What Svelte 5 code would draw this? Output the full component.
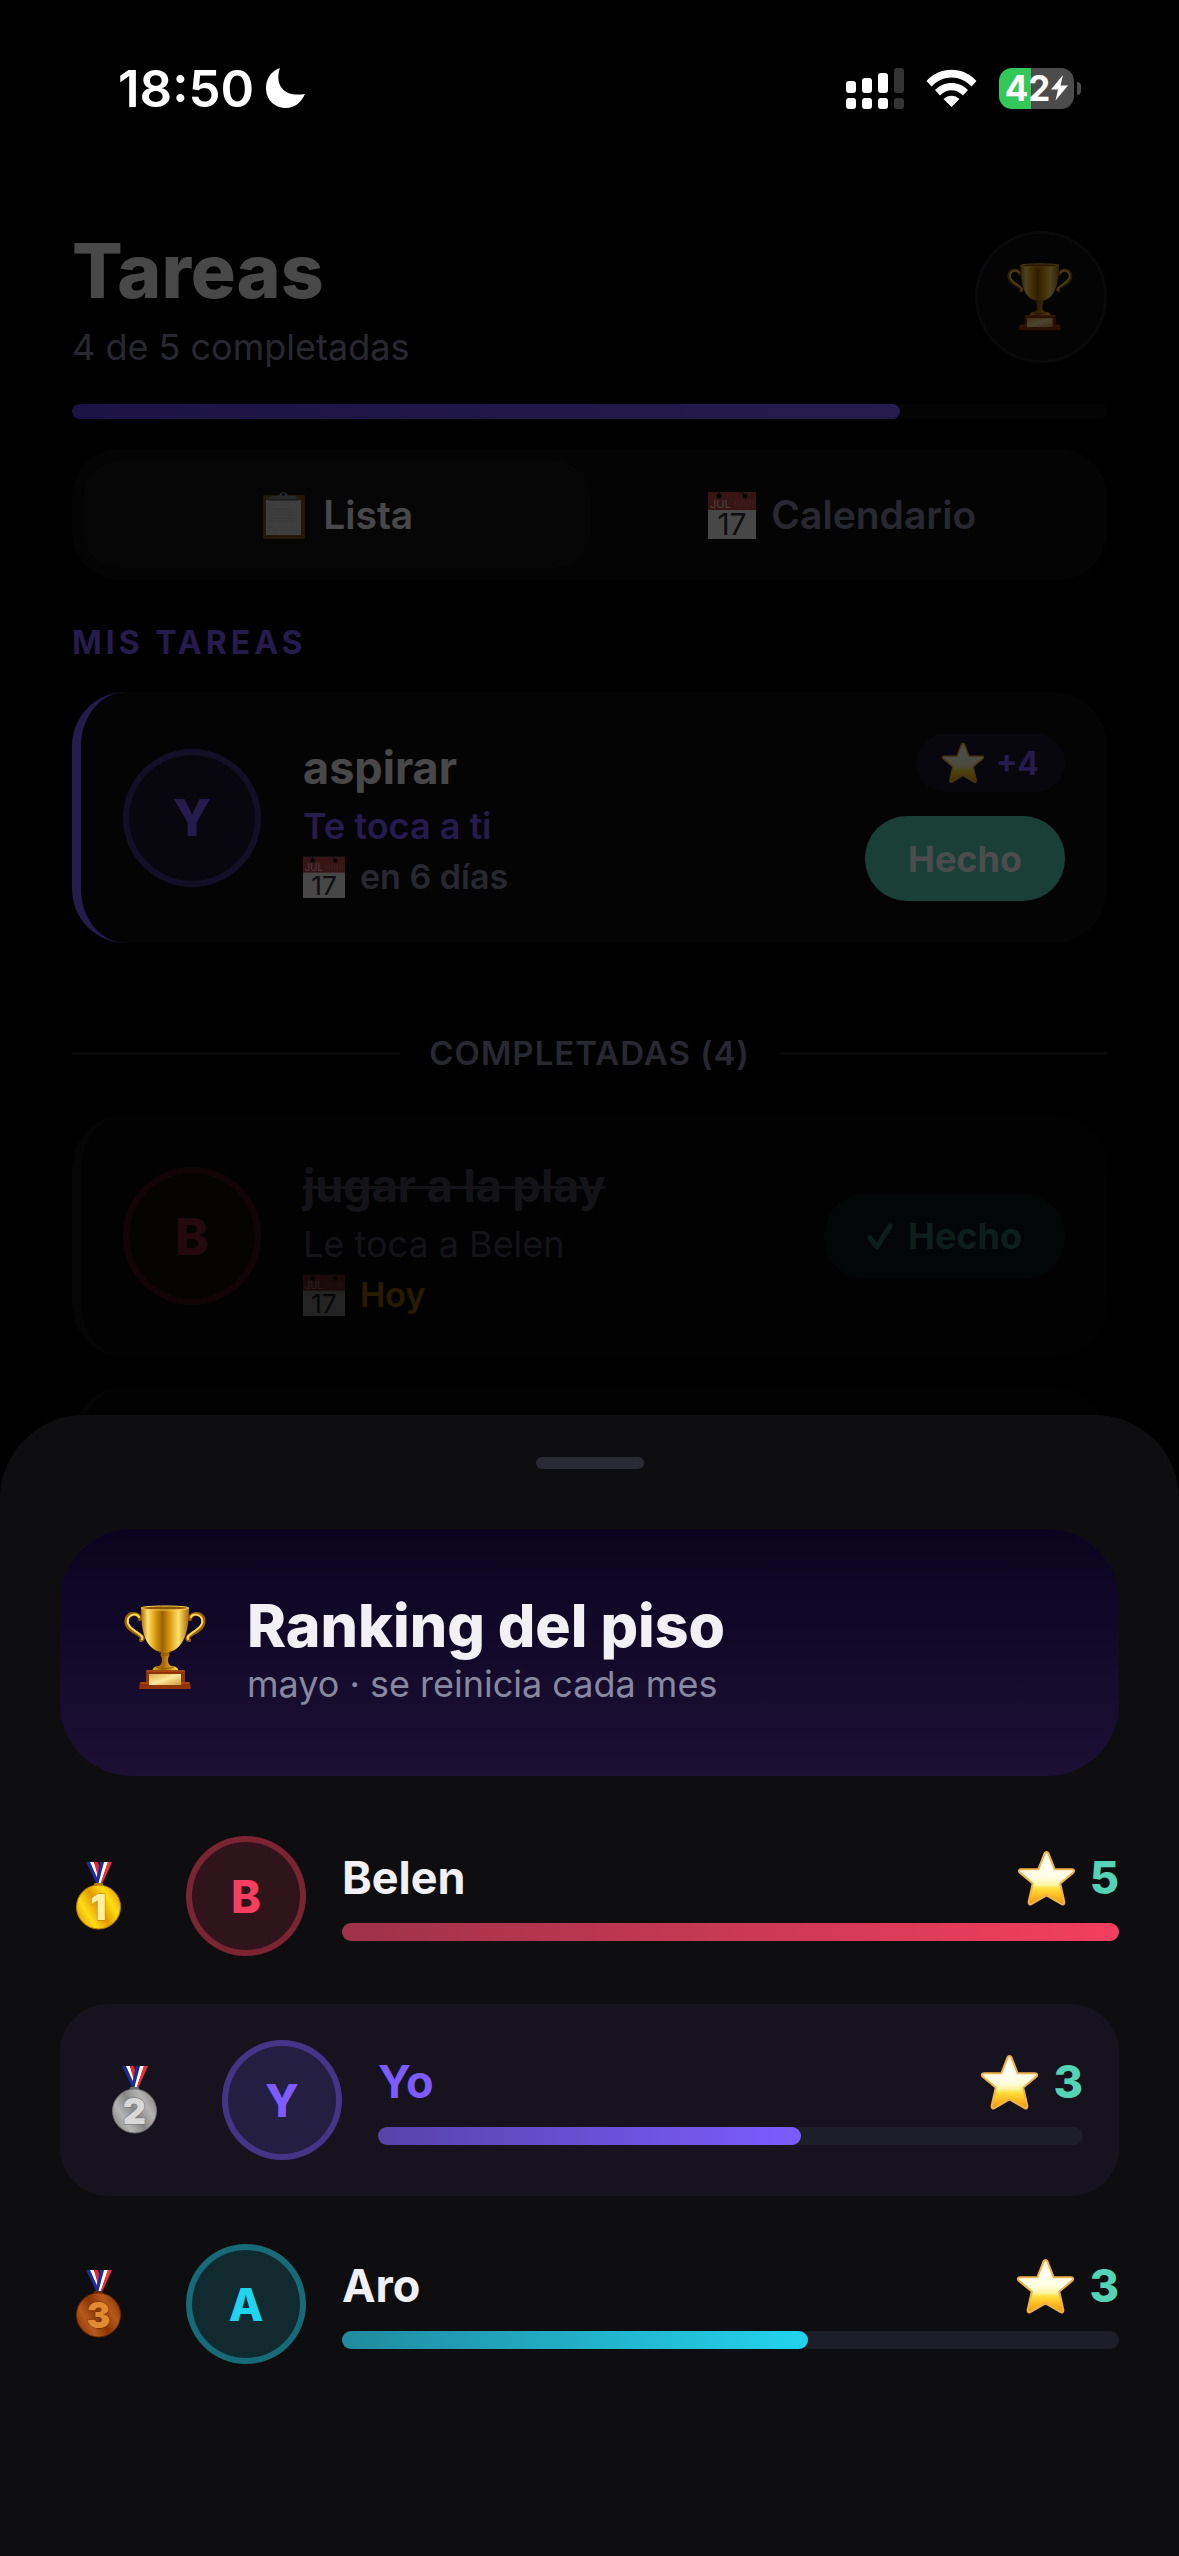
<script lang="ts">
	type Task = {
		initial: string;
		tone: string;
		title: string;
		who: string;
		mine: boolean;
		due: string;
		today: boolean;
		points?: number;
	};

	const tasks: Task[] = [
		{ initial: 'Y', tone: '#7c5cff', title: 'aspirar', who: 'Te toca a ti', mine: true, due: 'en 6 días', today: false, points: 4 }
	];

	const doneTasks: Task[] = [
		{ initial: 'B', tone: '#f43f5e', title: 'jugar a la play', who: 'Le toca a Belen', mine: false, due: 'Hoy', today: true }
	];

	const ranking = [
		{ place: 1, initial: 'B', name: 'Belen', tone: '#f43f5e', points: 5, me: false },
		{ place: 2, initial: 'Y', name: 'Yo', tone: '#7c5cff', points: 3, me: true },
		{ place: 3, initial: 'A', name: 'Aro', tone: '#22d3ee', points: 3, me: false }
	];

	const medals = [
		{ light: '#ffdc14', dark: '#e09c00', edge: '#b87a00', ink: '#fff0a0' },
		{ light: '#b4b4b4', dark: '#868686', edge: '#6e6e6e', ink: '#d8d8d8' },
		{ light: '#b45a1e', dark: '#8a3400', edge: '#6e2800', ink: '#e08a32' }
	];

	const best = Math.max(...ranking.map((r) => r.points));

	let tab = $state('lista');
</script>

{#snippet trophy(size: number, id: string, top: number)}
	<svg viewBox="0 {top} 105 105" width={size} height={size} aria-hidden="true">
		<defs>
			<linearGradient id="{id}-cup" x1="0" x2="1">
				<stop offset="0" stop-color="#a86a00" />
				<stop offset="0.14" stop-color="#ffe277" />
				<stop offset="0.28" stop-color="#e0a313" />
				<stop offset="0.45" stop-color="#9c6200" />
				<stop offset="0.6" stop-color="#d99a10" />
				<stop offset="0.78" stop-color="#ffe06a" />
				<stop offset="1" stop-color="#a46a00" />
			</linearGradient>
			<linearGradient id="{id}-plate" x1="0" y1="0" x2="1" y2="1">
				<stop offset="0" stop-color="#d9ac48" />
				<stop offset="0.5" stop-color="#ffe79a" />
				<stop offset="1" stop-color="#cd9a3a" />
			</linearGradient>
		</defs>
		<g fill="none" stroke-linecap="round">
			<path d="M26 24C25 18 16 17 13 23C10 32 19 36 24 39C29 42 30 44 27 45" stroke="#9a6306" stroke-width="4" />
			<path d="M25 22C23 18 16 19 14 24C12 31 20 35 24 38C28 41 29 42 28 44" stroke="#ffd65a" stroke-width="2" />
			<path d="M76 24C77 18 86 17 89 23C92 32 83 36 78 39C73 42 72 44 75 45" stroke="#9a6306" stroke-width="4" />
			<path d="M77 22C79 18 86 19 88 24C90 31 82 35 78 38C74 41 73 42 74 44" stroke="#ffd65a" stroke-width="2" />
		</g>
		<path d="M27 13C27 36 31 54 47 57V61C49 65 48 69 45 71C40 71 38 74 39 76H64C65 73 61 71 57 71C54 69 53 65 55 61V57C70 54 75 36 75 13Z" fill="url(#{id}-cup)" />
		<ellipse cx="51" cy="13" rx="24" ry="2" fill="#8a5600" stroke="#ffd24e" stroke-width="1" />
		<path d="M45 57C49 59 53 59 57 57M46 60H56M42 72C48 74 54 74 60 72" fill="none" stroke="#8a5600" stroke-width="1" />
		<path d="M32 75H71V87H76L77 94H25L26 87H32Z" fill="#8e3408" />
		<path d="M33 76H70M27 88H75" stroke="#bb571c" stroke-width="1" />
		<rect x="35" y="79" width="32" height="11" fill="url(#{id}-plate)" />
	</svg>
{/snippet}

{#snippet star(size: number, id: string)}
	<svg viewBox="0 0 56 54" width={size} height={size} aria-hidden="true">
		<defs>
			<linearGradient id={id} x1="0" y1="0" x2="0" y2="1">
				<stop offset="0" stop-color="#fff2c8" />
				<stop offset="0.25" stop-color="#fffff4" />
				<stop offset="0.5" stop-color="#fffde0" />
				<stop offset="0.62" stop-color="#fff6a8" />
				<stop offset="0.7" stop-color="#ffdf3c" />
				<stop offset="0.85" stop-color="#fcb81c" />
				<stop offset="1" stop-color="#e8960f" />
			</linearGradient>
		</defs>
		<path
			d="M26 2.500C27 .6 29 .6 30 2.500L36 18H53C55.500 18 55.800 20 54 21.500L41.500 32L45.500 50C45.800 52.500 44 53 42.500 52L28 43.500L13.500 52C12 53 10.200 52.500 10.500 50L14.500 32L2 21.500C.2 20 .5 18 3 18H20Z"
			fill="url(#{id})"
			stroke="#f0b24a"
			stroke-width="2"
		/>
	</svg>
{/snippet}

{#snippet calendar(size: number)}
	<svg viewBox="0 0 48 48" width={size} height={size} aria-hidden="true">
		<rect x="0" y="1" width="48" height="47" fill="#eeeeee" />
		<rect x="0" y="1" width="48" height="18" fill="#b84848" />
		<path d="M27 10V16M30 10V16M33 10V16M36 9V16M39 9V16M42 9V16M45 9V16" stroke="#d06c6c" stroke-width="1" />
		<circle cx="11" cy="5" r="2.500" fill="#1c1010" />
		<circle cx="37" cy="5" r="2.500" fill="#1c1010" />
		<path d="M11 1V5M34 1L37 5" stroke="#1c1010" stroke-width="1" />
		<text x="2" y="17" font-size="11" font-weight="400" fill="#f4d4d4">JUL</text>
		<text x="24" y="44" font-size="30" font-weight="400" text-anchor="middle" fill="#333333">17</text>
	</svg>
{/snippet}

{#snippet clipboard()}
	<svg viewBox="0 0 48 48" width="48" height="48" aria-hidden="true">
		<rect x="3" y="4" width="42" height="44" rx="2" fill="#74502a" />
		<rect x="6" y="9" width="35" height="35" fill="#cfcfcf" />
		<path d="M9 13H14M9 18H34M9 21H36M9 24H35M9 27H36M9 30H34M9 36H14M9 39H17" stroke="#bcbcbc" stroke-width="1" />
		<path d="M8 9C8 5 11 5 17 5C20 5 20 1 23.500 1S27 5 30 5C36 5 38 5 38 9Z" fill="#7f878e" />
		<circle cx="23.500" cy="3.500" r="1.500" fill="#111111" />
		<path d="M8 9H38" stroke="#444444" stroke-width="1" />
	</svg>
{/snippet}

{#snippet medal(place: number)}
	{@const m = medals[place - 1]}
	<svg viewBox="0 1 56 80" width="56" height="80" role="img" aria-label="Puesto {place}">
		<defs>
			<linearGradient id="medal-{place}" x1="0" y1="0.8" x2="1" y2="0.2">
				<stop offset="0" stop-color={m.dark} />
				<stop offset="0.25" stop-color={m.light} />
				<stop offset="0.5" stop-color={m.dark} />
				<stop offset="0.75" stop-color={m.light} />
				<stop offset="1" stop-color={m.dark} />
			</linearGradient>
		</defs>
		<path d="M16 7H20L29 26L27 30Z" fill="#1c2c96" />
		<path d="M20 7H24L29 22V27Z" fill="#ffffff" />
		<path d="M24 7H28L30 14L28 22Z" fill="#e8242c" />
		<path d="M30 7H34L29 29L26 26Z" fill="#1c2c96" />
		<path d="M34 7H38L31 28L28 30Z" fill="#ffffff" />
		<path d="M38 7H42L33 27L30 30Z" fill="#f0303a" />
		<rect x="24" y="28" width="9" height="4" rx="1" fill={m.edge} />
		<circle cx="28.500" cy="52" r="22" fill="url(#medal-{place})" stroke={m.edge} stroke-width="1" />
		<text x="28.500" y="65" font-size="36" font-weight="900" text-anchor="middle" fill={m.ink} stroke={m.edge} stroke-width="1" paint-order="stroke">{place}</text>
	</svg>
{/snippet}

{#snippet taskBody(task: Task)}
	<div class="avatar avatar-lg" style:--tone={task.tone}>{task.initial}</div>
	<div class="task-text">
		<h3 class="task-title">{task.title}</h3>
		<p class="task-who" class:mine={task.mine}>{task.who}</p>
		<p class="task-due" class:today={task.today}>
			{@render calendar(42)}
			<span>{task.due}</span>
		</p>
	</div>
{/snippet}

<div class="screen">
	<div class="status">
		<div class="clock">
			<span>18:50</span>
			<svg viewBox="0 0 40 40" width="40" height="40" aria-hidden="true">
				<path d="M14 0C9 14 15 30 39 26C35 35 28 40 20 40C8 40 0 31 0 20C0 11 5 3 14 0Z" fill="#fff" />
			</svg>
		</div>
		<div class="indicators">
			<svg viewBox="0 0 58 41" width="58" height="41" aria-hidden="true">
				<g fill="#fff">
					<rect x="0" y="13" width="10" height="12" rx="3" />
					<rect x="16" y="10" width="10" height="15" rx="3" />
					<rect x="32" y="5" width="10" height="20" rx="3" />
					<rect x="0" y="30" width="10" height="11" rx="3" />
					<rect x="16" y="30" width="10" height="11" rx="3" />
					<rect x="32" y="30" width="10" height="11" rx="3" />
				</g>
				<g fill="#333">
					<rect x="48" y="0" width="10" height="25" rx="3" />
					<rect x="48" y="30" width="10" height="11" rx="3" />
				</g>
			</svg>
			<svg viewBox="0 0 51 41" width="51" height="41" aria-hidden="true">
				<path d="M.5 13C14-2 37-2 50.500 13L45.500 18.500C34 6.500 17 6.500 5.500 18.500Z" fill="#fff" />
				<path d="M9 22C18 12.500 33 12.500 42 22L37 27.500C30 20.500 21 20.500 14 27.500Z" fill="#fff" />
				<path d="M17.500 31C22 26.500 29 26.500 33.500 31L25.500 39Z" fill="#fff" />
			</svg>
			<div class="battery">
				<span class="battery-body">
					42
					<svg viewBox="0 0 17 26" width="17" height="26" aria-hidden="true">
						<path d="M12 0L0 14.500H7L4.500 25.500L17 10.500H9.500Z" fill="#fff" />
					</svg>
				</span>
				<span class="battery-tip"></span>
			</div>
		</div>
	</div>

	<main class="tasks">
		<header class="head">
			<div>
				<h1 class="title">Tareas</h1>
				<p class="subtitle">4 de 5 completadas</p>
			</div>
			<button class="trophy-btn" type="button" aria-label="Ver ranking">
				{@render trophy(84, 'head', 0)}
			</button>
		</header>

		<div class="progress"><div class="progress-fill" style:width="{(4 / 5) * 100}%"></div></div>

		<div class="tabs">
			<button type="button" class="tab" class:active={tab === 'lista'} onclick={() => (tab = 'lista')}>
				{@render clipboard()}
				<span>Lista</span>
			</button>
			<button type="button" class="tab" class:active={tab === 'calendario'} onclick={() => (tab = 'calendario')}>
				{@render calendar(48)}
				<span>Calendario</span>
			</button>
		</div>

		<h2 class="section">MIS TAREAS</h2>
		{#each tasks as task}
			<article class="card" style:--edge={task.tone}>
				{@render taskBody(task)}
				<div class="actions">
					<span class="pill">
						{@render star(42, 'star-pill')}
						<span>+{task.points}</span>
					</span>
					<button type="button" class="btn">Hecho</button>
				</div>
			</article>
		{/each}

		<h2 class="divider">COMPLETADAS (4)</h2>
		<div class="done-list">
			{#each doneTasks as task}
				<article class="card done">
					{@render taskBody(task)}
					<div class="actions">
						<button type="button" class="btn btn-done">
							<svg viewBox="0 0 26 28" width="26" height="28" aria-hidden="true">
								<path d="M3 16L10 25L23 4" fill="none" stroke="currentColor" stroke-width="5" stroke-linecap="round" stroke-linejoin="round" />
							</svg>
							<span>Hecho</span>
						</button>
					</div>
				</article>
			{/each}
			<article class="card done next"></article>
		</div>
	</main>

	<div class="scrim"></div>

	<div class="sheet" role="dialog" aria-labelledby="ranking-title">
		<div class="handle"></div>

		<div class="hero">
			{@render trophy(105, 'hero', 5)}
			<div>
				<h2 class="hero-title" id="ranking-title">Ranking del piso</h2>
				<p class="hero-sub">mayo · se reinicia cada mes</p>
			</div>
		</div>

		<ol class="ranking">
			{#each ranking as r}
				<li class="rank" class:me={r.me} style:--tone={r.tone}>
					<span class="medal">{@render medal(r.place)}</span>
					<div class="avatar">{r.initial}</div>
					<div class="rank-main">
						<div class="rank-head">
							<span class="rank-name">{r.name}</span>
							<span class="rank-points">
								{@render star(57, `star-${r.place}`)}
								<span>{r.points}</span>
							</span>
						</div>
						<div class="track"><div class="track-fill" style:width="{(r.points / best) * 100}%"></div></div>
					</div>
				</li>
			{/each}
		</ol>
	</div>
</div>

<style>
	:global(body) {
		background: #000;
	}
	.screen {
		--ink: #f0f0f5;
		--muted: #8888a0;
		--line: #1e1e28;
		--surface: #0e0e10;
		--purple: #7c5cff;
		--green: #55d3b5;
		position: relative;
		height: 100vh;
		overflow: hidden;
		background: #000;
		color: var(--ink);
		font-family: Inter, 'Noto Sans', sans-serif;
	}
	h1,
	h2,
	h3,
	p,
	ol {
		margin: 0;
		padding: 0;
	}
	button {
		font: inherit;
		color: inherit;
		border: none;
		padding: 0;
		cursor: pointer;
	}
	svg {
		display: block;
		flex: none;
		overflow: visible;
	}

	.status {
		position: relative;
		z-index: 2;
		display: flex;
		align-items: center;
		justify-content: space-between;
		height: 176px;
		padding: 0 98px 0 118px;
		box-sizing: border-box;
		color: #fff;
	}
	.clock {
		display: flex;
		align-items: center;
		gap: 12px;
		font-size: 51px;
		font-weight: 600;
	}
	.indicators {
		display: flex;
		align-items: center;
		gap: 22px;
	}
	.battery {
		display: flex;
		align-items: center;
		gap: 3px;
	}
	.battery-body {
		display: flex;
		align-items: center;
		justify-content: center;
		gap: 1px;
		width: 75px;
		height: 41px;
		border-radius: 13px;
		background: linear-gradient(90deg, #34c759 43%, #4c4c4c 43%);
		font-size: 35px;
		font-weight: 700;
		line-height: 41px;
	}
	.battery-tip {
		width: 4px;
		height: 13px;
		border-radius: 0 4px 4px 0;
		background: #4c4c4c;
	}

	.tasks {
		padding: 48px 72px 0;
	}
	.head {
		display: flex;
		align-items: center;
		justify-content: space-between;
	}
	.title {
		font-size: 75px;
		font-weight: 800;
		line-height: 94px;
	}
	.subtitle {
		margin-top: 6px;
		font-size: 36px;
		line-height: 46px;
		color: var(--muted);
	}
	.trophy-btn {
		display: flex;
		align-items: center;
		justify-content: center;
		width: 132px;
		height: 132px;
		box-sizing: border-box;
		border: 3px solid var(--line);
		border-radius: 50%;
		background: var(--surface);
	}
	.progress {
		height: 15px;
		margin-top: 34px;
		border-radius: 8px;
		background: var(--surface);
		overflow: hidden;
	}
	.progress-fill {
		height: 100%;
		border-radius: 8px;
		background: linear-gradient(90deg, #5f3fe8, #7c5cff);
	}

	.tabs {
		display: flex;
		margin-top: 30px;
		padding: 12px;
		border-radius: 48px;
		background: var(--surface);
	}
	.tab {
		display: flex;
		flex: 1;
		align-items: center;
		justify-content: center;
		gap: 15px;
		height: 107px;
		border-radius: 36px;
		background: transparent;
		font-size: 39px;
		font-weight: 600;
		color: var(--muted);
	}
	.tab.active {
		background: #16161a;
		color: var(--ink);
	}

	.section {
		margin: 41px 0 27px;
		font-size: 32px;
		font-weight: 700;
		line-height: 44px;
		letter-spacing: 4px;
		color: var(--purple);
	}
	.card {
		display: flex;
		align-items: center;
		gap: 42px;
		padding: 42px;
		border-left: 9px solid var(--edge, #24242f);
		border-radius: 54px;
		background: var(--surface);
	}
	.card.done {
		opacity: 0.5;
	}
	.card.next {
		height: 158px;
	}
	.done-list {
		display: flex;
		flex-direction: column;
		gap: 30px;
	}
	.avatar {
		display: flex;
		flex: none;
		align-items: center;
		justify-content: center;
		width: 120px;
		height: 120px;
		box-sizing: border-box;
		border: 6px solid color-mix(in srgb, var(--tone) 38%, transparent);
		border-radius: 50%;
		background: color-mix(in srgb, var(--tone) 15%, transparent);
		color: var(--tone);
		font-size: 45px;
		font-weight: 800;
	}
	.avatar-lg {
		width: 138px;
		height: 138px;
		font-size: 51px;
	}
	.task-text {
		display: flex;
		flex: 1;
		flex-direction: column;
		gap: 8px;
	}
	.task-title {
		font-size: 45px;
		font-weight: 700;
		line-height: 57px;
	}
	.done .task-title {
		color: var(--muted);
		text-decoration: line-through;
		text-decoration-thickness: 3px;
	}
	.task-who {
		font-size: 36px;
		line-height: 45px;
		color: var(--muted);
	}
	.task-who.mine {
		font-weight: 600;
		color: var(--purple);
	}
	.task-due {
		display: flex;
		align-items: center;
		gap: 15px;
		height: 40px;
		font-size: 34px;
		font-weight: 600;
		line-height: 40px;
		color: var(--muted);
	}
	.task-due.today {
		color: #ffc107;
	}
	.actions {
		display: flex;
		flex-direction: column;
		align-items: flex-end;
		gap: 24px;
	}
	.pill {
		display: flex;
		align-items: center;
		gap: 12px;
		height: 58px;
		padding: 0 26px;
		border-radius: 29px;
		background: #1c1830;
		color: var(--purple);
		font-size: 32px;
		font-weight: 700;
	}
	.btn {
		display: flex;
		align-items: center;
		gap: 15px;
		height: 85px;
		padding: 0 43px;
		border-radius: 42px;
		background: var(--green);
		color: #fff;
		font-size: 36px;
		font-weight: 700;
	}
	.btn-done {
		background: color-mix(in srgb, var(--green) 15%, transparent);
		color: var(--green);
	}

	.divider {
		display: flex;
		align-items: center;
		gap: 29px;
		margin: 89px 0 40px;
		font-size: 33px;
		font-weight: 600;
		line-height: 43px;
		letter-spacing: 1px;
		color: var(--muted);
	}
	.divider::before,
	.divider::after {
		content: '';
		flex: 1;
		height: 3px;
		background: var(--line);
	}

	.scrim {
		position: absolute;
		inset: 0;
		z-index: 1;
		background: rgba(0, 0, 0, 0.7);
	}
	.sheet {
		position: absolute;
		right: 0;
		bottom: 0;
		left: 0;
		z-index: 2;
		padding: 42px 60px 156px;
		border-radius: 84px 84px 0 0;
		background: var(--surface);
	}
	.handle {
		width: 108px;
		height: 12px;
		margin: 0 auto 60px;
		border-radius: 6px;
		background: #2a2a35;
	}
	.hero {
		display: flex;
		align-items: center;
		gap: 28px;
		padding: 65px 54px;
		border-radius: 72px;
		background: linear-gradient(180deg, #0a0420, #1c1035);
	}
	.hero-title {
		font-size: 59px;
		font-weight: 800;
		line-height: 63px;
	}
	.hero-sub {
		font-size: 36px;
		line-height: 54px;
		color: var(--muted);
	}

	.ranking {
		display: flex;
		flex-direction: column;
		gap: 12px;
		margin-top: 24px;
		list-style: none;
	}
	.rank {
		display: flex;
		align-items: center;
		gap: 36px;
		padding: 36px 0;
	}
	.rank.me {
		padding: 36px;
		border-radius: 48px;
		background: #16131f;
	}
	.medal {
		width: 80px;
		padding-left: 10px;
	}
	.rank-main {
		flex: 1;
	}
	.rank-head {
		display: flex;
		align-items: center;
		justify-content: space-between;
		height: 54px;
		margin-bottom: 18px;
		font-size: 45px;
		line-height: 54px;
	}
	.rank-name {
		font-weight: 700;
	}
	.me .rank-name {
		color: var(--tone);
	}
	.rank-points {
		display: flex;
		align-items: center;
		gap: 15px;
		font-weight: 800;
		color: var(--green);
	}
	.track {
		height: 18px;
		border-radius: 9px;
		background: var(--line);
	}
	.track-fill {
		height: 100%;
		border-radius: 9px;
		background: linear-gradient(90deg, color-mix(in srgb, var(--tone) 60%, transparent), var(--tone));
	}
</style>
